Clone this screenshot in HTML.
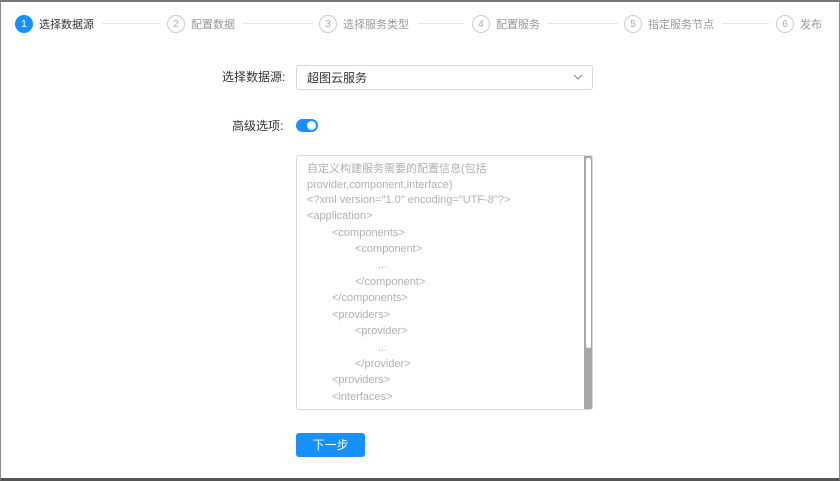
<!DOCTYPE html>
<html><head><meta charset="utf-8"><style>
*{box-sizing:border-box;margin:0;padding:0}
body{width:840px;height:481px;overflow:hidden;background:#fff;font-family:"Liberation Sans","Noto Sans CJK SC",sans-serif;font-size:12px;color:#333;position:relative}
.frame{position:absolute;left:0;top:0;width:840px;height:481px;border:1px solid #8a8a8a;border-bottom:3px solid #555;border-top:2px solid #777}
.step{position:absolute;top:15px;height:18px;display:flex;align-items:center;color:#999;font-size:11px}
.c{width:18px;height:18px;border-radius:50%;border:1px solid #ccc;display:flex;align-items:center;justify-content:center;font-size:10px;color:#aaa;margin-right:6px}
.step.a{color:#333}.step.a .c{background:#1890ff;border-color:#1890ff;color:#fff}
.ln{position:absolute;top:23px;height:1px;background:#e3e3e3}
.lbl{position:absolute;font-size:12px;color:#333}
.sel{position:absolute;left:296px;top:65px;width:297px;height:25px;border:1px solid #d9d9d9;border-radius:3px;padding:3px 10px;font-size:12px}
.ta{position:absolute;left:296px;top:155px;width:297px;height:255px;border:1px solid #d9d9d9;border-radius:3px;overflow:hidden}
.ta div{position:absolute;font-size:11px;color:#b0b0b0;white-space:nowrap}
.sb{position:absolute;left:287px;top:0;width:9px;height:255px;background:#a8a8a8}
.th{position:absolute;left:2px;top:2px;width:5px;height:190px;background:#fff;border-radius:2px}
.btn{position:absolute;left:296px;top:433px;width:69px;height:24px;background:#1890ff;border-radius:3px;color:#fff;font-size:12px;text-align:center;line-height:24px}
</style></head><body>
<div class="frame"></div>
<div class="step a" style="left:15px"><div class="c">1</div>选择数据源</div>
<div class="ln" style="left:102px;width:58px"></div>
<div class="step" style="left:167px"><div class="c">2</div>配置数据</div>
<div class="ln" style="left:243px;width:70px"></div>
<div class="step" style="left:319px"><div class="c">3</div>选择服务类型</div>
<div class="ln" style="left:418px;width:46px"></div>
<div class="step" style="left:472px"><div class="c">4</div>配置服务</div>
<div class="ln" style="left:548px;width:70px"></div>
<div class="step" style="left:624px"><div class="c">5</div>指定服务节点</div>
<div class="ln" style="left:722px;width:47px"></div>
<div class="step" style="left:776px"><div class="c">6</div>发布</div>

<div class="lbl" style="left:222px;top:68px">选择数据源:</div>
<div class="sel">超图云服务<svg style="position:absolute;right:9px;top:8px" width="10" height="7" viewBox="0 0 10 7"><path d="M1 1l4 4 4-4" fill="none" stroke="#888" stroke-width="1.1"/></svg></div>
<div class="lbl" style="left:232px;top:117px">高级选项:</div>
<div style="position:absolute;left:296px;top:119px;width:22px;height:13px;border-radius:7px;background:#1890ff"><div style="position:absolute;right:2px;top:2px;width:9px;height:9px;border-radius:50%;background:#fff"></div></div>

<div class="ta">
<div style="left:10px;top:4px">自定义构建服务需要的配置信息(包括</div>
<div style="left:10px;top:23px">provider,component,interface)</div>
<div style="left:10px;top:38px">&lt;?xml version="1.0" encoding="UTF-8"?&gt;</div>
<div style="left:10px;top:54px">&lt;application&gt;</div>
<div style="left:35px;top:71px">&lt;components&gt;</div>
<div style="left:58px;top:87px">&lt;component&gt;</div>
<div style="left:81px;top:103px">...</div>
<div style="left:58px;top:120px">&lt;/component&gt;</div>
<div style="left:35px;top:136px">&lt;/components&gt;</div>
<div style="left:35px;top:153px">&lt;providers&gt;</div>
<div style="left:58px;top:169px">&lt;provider&gt;</div>
<div style="left:81px;top:186px">...</div>
<div style="left:58px;top:202px">&lt;/provider&gt;</div>
<div style="left:35px;top:218px">&lt;providers&gt;</div>
<div style="left:35px;top:235px">&lt;interfaces&gt;</div>
<div class="sb"><div class="th"></div></div>
</div>
<div class="btn">下一步</div>
</body></html>
